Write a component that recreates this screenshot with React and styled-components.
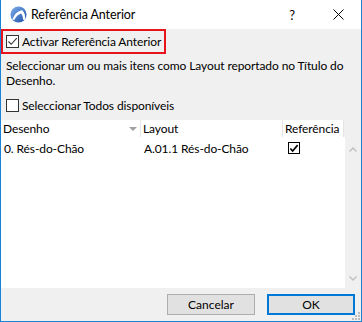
import React, { useState } from "react";
import styled, { createGlobalStyle } from "styled-components";

const GlobalStyle = createGlobalStyle`
  html, body {
    margin: 0;
    padding: 0;
    background: #ffffff;
  }
  * {
    box-sizing: border-box;
  }
`;

const FONT = `"Segoe UI", Lato, "Noto Sans", sans-serif`;

function AppIcon() {
  return (
    <svg width="17" height="17" viewBox="0 0 18 18">
      <defs>
        <linearGradient id="ig" x1="0" y1="0" x2="1" y2="1">
          <stop offset="0" stopColor="#7fb0ee" />
          <stop offset="1" stopColor="#1d4fa8" />
        </linearGradient>
      </defs>
      <circle cx="9" cy="9" r="8.5" fill="url(#ig)" />
      <path d="M2.5 14.5 C4.5 8.5 8.5 5 13 4.5 C15.5 7 16.5 10.5 16 14.5 L13.8 14.5 C13.8 11.5 13 9.2 11.6 8 C8.8 9 6.2 11.5 4.8 14.5 Z" fill="#ffffff" />
    </svg>
  );
}

function CheckMark({ bold }) {
  return (
    <svg width="11" height="11" viewBox="0 0 11 11">
      <path
        d={bold ? "M1.5 5.5 L4 8.2 L9.5 1.8" : "M1.5 5.5 L4.2 8.3 L9.8 2.2"}
        fill="none"
        stroke={bold ? "#000000" : "#333333"}
        strokeWidth={bold ? 1.8 : 1.1}
      />
    </svg>
  );
}

export default function App() {
  const [active, setActive] = useState(true);
  const [all, setAll] = useState(false);
  const [refChecked, setRefChecked] = useState(true);

  return (
    <Window>
      <GlobalStyle />
      <TitleBar>
        <TitleLeft>
          <AppIcon />
          <TitleText>Referência Anterior</TitleText>
        </TitleLeft>
        <TitleButtons>
          <HelpBtn>?</HelpBtn>
          <CloseBtn>
            <svg width="11" height="11" viewBox="0 0 11 11">
              <path d="M0.5 0.5 L10.5 10.5 M10.5 0.5 L0.5 10.5" stroke="#000" strokeWidth="1" />
            </svg>
          </CloseBtn>
        </TitleButtons>
      </TitleBar>
      <Body>
        <Highlight>
          <CheckRow onClick={() => setActive(!active)}>
            <Box>{active && <CheckMark />}</Box>
            <span>Activar Referência Anterior</span>
          </CheckRow>
        </Highlight>
        <Info>
          Seleccionar um ou mais itens como Layout reportado no Título do
          Desenho.
        </Info>
        <SelectAll onClick={() => setAll(!all)}>
          <Box>{all && <CheckMark />}</Box>
          <span>Seleccionar Todos disponíveis</span>
        </SelectAll>
        <Table>
          <Header>
            <HeadCell $w={140}>
              <span>Desenho</span>
              <SortArrow />
            </HeadCell>
            <HeadCell $w={142}>Layout</HeadCell>
            <HeadCell $w={61}>Referência</HeadCell>
          </Header>
          <TableBody>
            <Rows>
              <Row>
                <Cell $w={140}>0. Rés-do-Chão</Cell>
                <Cell $w={142}>A.01.1 Rés-do-Chão</Cell>
                <Cell $w={61} $center>
                  <SmallBox onClick={() => setRefChecked(!refChecked)}>
                    {refChecked && <CheckMark bold />}
                  </SmallBox>
                </Cell>
              </Row>
            </Rows>
            <ScrollBar>
              <ScrollArrow viewBox="0 0 8 5">
                <path d="M0.5 4.5 L4 1 L7.5 4.5" fill="none" stroke="#c2c2c2" strokeWidth="1.5" />
              </ScrollArrow>
              <ScrollArrow viewBox="0 0 8 5">
                <path d="M0.5 0.5 L4 4 L7.5 0.5" fill="none" stroke="#c2c2c2" strokeWidth="1.5" />
              </ScrollArrow>
            </ScrollBar>
          </TableBody>
        </Table>
        <Footer>
          <Button>Cancelar</Button>
          <Button $primary>OK</Button>
        </Footer>
        <Grip viewBox="0 0 9 9">
          {[
            [7, 1],
            [4, 4],
            [7, 4],
            [1, 7],
            [4, 7],
            [7, 7],
          ].map(([x, y]) => (
            <rect key={`${x}-${y}`} x={x} y={y} width="2" height="2" fill="#bcbcbc" />
          ))}
        </Grip>
      </Body>
    </Window>
  );
}

const Window = styled.div`
  width: 362px;
  height: 322px;
  display: flex;
  flex-direction: column;
  border: 1px solid #1883d7;
  border-top: none;
  font-family: ${FONT};
  font-size: 12px;
  letter-spacing: -0.1px;
  color: #000;
  background: #f0f0f0;
  position: relative;
  overflow: hidden;
`;

const TitleBar = styled.div`
  height: 29px;
  flex: none;
  display: flex;
  align-items: center;
  justify-content: space-between;
  background: #ffffff;
  padding-left: 9px;
`;

const TitleLeft = styled.div`
  display: flex;
  align-items: center;
  gap: 4px;
`;

const TitleText = styled.span`
  font-size: 12.5px;
  color: #000;
`;

const TitleButtons = styled.div`
  display: flex;
  align-items: center;
  height: 100%;
`;

const HelpBtn = styled.div`
  width: 46px;
  height: 100%;
  display: flex;
  align-items: center;
  justify-content: center;
  font-size: 13px;
`;

const CloseBtn = styled.div`
  width: 46px;
  height: 100%;
  display: flex;
  align-items: center;
  justify-content: center;
`;

const Body = styled.div`
  flex: 1;
  display: flex;
  flex-direction: column;
  position: relative;
`;

const Highlight = styled.div`
  width: 165px;
  height: 25px;
  flex: none;
  border: 2px solid #e8141c;
  display: flex;
  align-items: center;
  padding-left: 3px;
`;

const CheckRow = styled.label`
  display: flex;
  align-items: center;
  gap: 3px;
  height: 14px;
  white-space: nowrap;
  cursor: pointer;
`;

const Box = styled.span`
  width: 13px;
  height: 13px;
  flex: none;
  border: 1px solid #333333;
  background: #ffffff;
  display: flex;
  align-items: center;
  justify-content: center;
`;

const Info = styled.p`
  margin: 4px 0 0 5px;
  line-height: 15px;
  width: 345px;
`;

const SelectAll = styled(CheckRow)`
  margin: 10px 0 0 5px;
`;

const Table = styled.div`
  margin-top: 8px;
  height: 168px;
  flex: none;
  display: flex;
  flex-direction: column;
`;

const Header = styled.div`
  display: flex;
  height: 17px;
  width: 343px;
  flex: none;
  background: #ffffff;
`;

const HeadCell = styled.div`
  width: ${(p) => p.$w}px;
  display: flex;
  align-items: center;
  justify-content: space-between;
  padding: 0 3px 0 2px;
  border-right: 1px solid #e5e5e5;
  white-space: nowrap;
`;

const SortArrow = styled.span`
  width: 0;
  height: 0;
  border-left: 4px solid transparent;
  border-right: 4px solid transparent;
  border-top: 4px solid #a0a0a0;
`;

const TableBody = styled.div`
  flex: 1;
  display: flex;
`;

const Rows = styled.div`
  width: 344px;
  background: #ffffff;
  padding-top: 2px;
`;

const Row = styled.div`
  display: flex;
  height: 18px;
`;

const Cell = styled.div`
  width: ${(p) => p.$w}px;
  display: flex;
  align-items: center;
  padding-left: ${(p) => (p.$center ? 5 : 3)}px;
  white-space: nowrap;
`;

const SmallBox = styled.span`
  width: 12px;
  height: 12px;
  border: 1px solid #000;
  display: flex;
  align-items: center;
  justify-content: center;
`;

const ScrollBar = styled.div`
  flex: 1;
  display: flex;
  flex-direction: column;
  justify-content: space-between;
  align-items: center;
  padding: 10px 0 7px;
  background: #f0f0f0;
`;

const ScrollArrow = styled.svg`
  width: 8px;
  height: 5px;
`;

const Footer = styled.div`
  display: flex;
  justify-content: flex-end;
  gap: 12px;
  padding: 6px 6px 0 0;
`;

const Button = styled.button`
  width: 88px;
  height: 21px;
  font-family: ${FONT};
  font-size: 12px;
  color: #000;
  background: #e1e1e1;
  border: ${(p) => (p.$primary ? "2px solid #0078d7" : "1px solid #adadad")};
  padding: 0;
`;

const Grip = styled.svg`
  position: absolute;
  right: 1px;
  bottom: 1px;
  width: 9px;
  height: 9px;
`;
